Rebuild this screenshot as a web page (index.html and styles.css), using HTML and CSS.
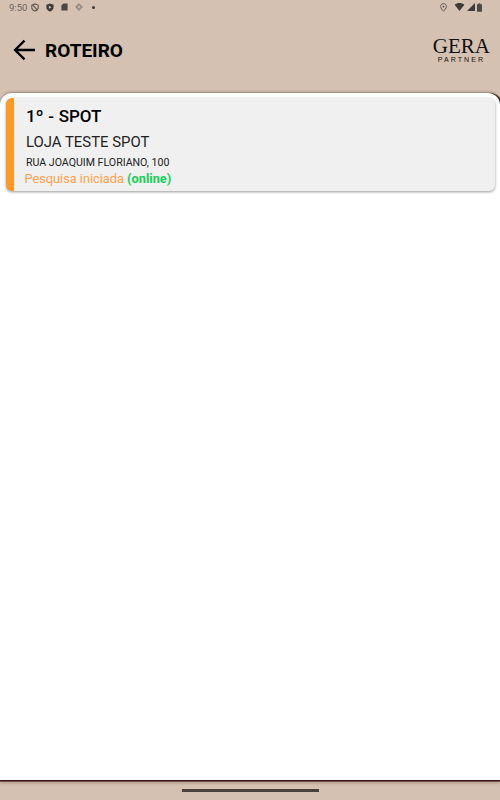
FILE: index.html
```html
<!DOCTYPE html>
<html lang="pt-BR">
<head>
    <meta charset="UTF-8">
    <meta name="viewport" content="width=device-width, initial-scale=1.0">
    <title>Roteiro</title>
    <link rel="stylesheet" href="styles.css">
</head>
<body>
    <header class="topo">
        <div class="status">
            <span class="hora">9:50</span>
            <div class="status-icones">
                <svg width="8" height="9" viewBox="0 0 10 11"><path d="M5 1 L9 2.4 V5.5 C9 8 7 9.4 5 10 C3 9.4 1 8 1 5.5 V2.4 Z M2.5 2.5 L7.5 8.5" fill="none" stroke="#5a534d" stroke-width="1.3"/></svg>
                <svg width="8" height="9" viewBox="0 0 10 11"><path d="M5 .5 L9.5 2 V5.5 C9.5 8 7.2 9.8 5 10.5 C2.8 9.8 .5 8 .5 5.5 V2 Z" fill="#3f3b38"/><path d="M3.6 3.4 L7 5.3 L3.6 7.2 Z" fill="#d5c1b2"/></svg>
                <svg width="7" height="8" viewBox="0 0 9 10"><path d="M3 .5 H8.5 V9.5 H.5 V3 Z" fill="#4d4843"/></svg>
                <svg width="8" height="8" viewBox="0 0 10 10"><path d="M5 0 L10 5 L5 10 L0 5 Z" fill="#9a8f86"/><circle cx="5" cy="5" r="1.3" fill="#d5c1b2"/></svg>
                <span class="ponto"></span>
            </div>
            <div class="status-direita">
                <svg width="7" height="9" viewBox="0 0 8 10"><path d="M4 .7 C6 .7 7.3 2.1 7.3 3.8 C7.3 5.7 5.4 7.8 4 9.3 C2.6 7.8 .7 5.7 .7 3.8 C.7 2.1 2 .7 4 .7 Z" fill="none" stroke="#5a534d" stroke-width="1.1"/><circle cx="4" cy="3.9" r="1" fill="#5a534d"/></svg>
                <svg width="11" height="8" viewBox="0 0 11 9"><path d="M0 2 C3 -.6 8 -.6 11 2 L5.5 9 Z" fill="#3f3b38"/></svg>
                <svg width="8" height="8" viewBox="0 0 9 9"><path d="M9 0 V9 H0 Z" fill="#3f3b38"/></svg>
                <svg width="5" height="9" viewBox="0 0 6 10"><path d="M2 0 H4 V1 H6 V10 H0 V1 H2 Z" fill="#4d4843"/></svg>
            </div>
        </div>
        <div class="barra">
            <svg class="voltar" width="24" height="24" viewBox="0 0 24 24"><path d="M23 12 H4 M12.5 2.6 L3.1 12 L12.5 21.4" fill="none" stroke="#000" stroke-width="2.3"/></svg>
            <h1>ROTEIRO</h1>
            <div class="logo">
                <span class="logo-nome">GERA</span>
                <span class="logo-sub">PARTNER</span>
            </div>
        </div>
    </header>

    <main class="conteudo">
        <div class="card">
            <h2>1º - SPOT</h2>
            <p class="loja">LOJA TESTE SPOT</p>
            <p class="endereco">RUA JOAQUIM FLORIANO, 100</p>
            <p class="situacao">Pesquisa iniciada <b>(online)</b></p>
        </div>
    </main>

    <footer class="rodape">
        <span class="gesto"></span>
    </footer>
</body>
</html>
```

FILE: styles.css
```css
/* Estilos gerais */
body {
    font-family: Roboto, sans-serif;
    background-color: #d5c1b2;
    margin: 0;
    height: 800px;
    overflow: hidden;
    display: flex;
    flex-direction: column;
}

/* Topo */
.topo {
    height: 93px;
    flex-shrink: 0;
}

.status {
    height: 14px;
    padding: 0 18px 0 9px;
    display: flex;
    align-items: center;
    color: #6a625b;
    font-size: 9.5px;
}

.hora {
    margin-right: 4px;
}

.status-icones {
    display: flex;
    align-items: center;
    gap: 7px;
}

.ponto {
    width: 3px;
    height: 3px;
    margin-left: 2px;
    border-radius: 50%;
    background-color: #3f3b38;
}

.status-direita {
    margin-left: auto;
    display: flex;
    align-items: center;
    gap: 2px;
}

.status-direita svg:first-child {
    margin-right: 5px;
}

.barra {
    display: flex;
    align-items: center;
    height: 72px;
    padding: 0 10px 0 12px;
}

.voltar {
    margin-right: 9px;
}

.barra h1 {
    margin: 0;
    font-size: 19px;
    font-weight: 700;
    color: #000;
}

.logo {
    margin-left: auto;
    display: flex;
    flex-direction: column;
    align-items: center;
    color: #111;
}

.logo-nome {
    font-family: "Liberation Serif", serif;
    font-size: 21px;
    line-height: 18px;
}

.logo-sub {
    font-family: "Liberation Sans", sans-serif;
    font-size: 7px;
    line-height: 8px;
    margin-top: 1px;
    letter-spacing: 2.1px;
}

/* Conteudo */
.conteudo {
    flex: 1;
    background-color: #fff;
    border-radius: 12px 12px 0 0;
    padding: 5px 5px 0 6px;
    box-shadow: 2px 0 1px #2b1a14, 0 -1px 3px rgba(70, 50, 40, 0.35), 0 1.5px 0 #3a1014, 0 3px 3px rgba(70, 50, 40, 0.3);
}

.card {
    height: 93px;
    box-sizing: border-box;
    padding: 7px 12px 0 12px;
    background-color: #f0f0f0;
    border-left: 8px solid #ff9a26;
    border-radius: 6px;
    box-shadow: 0 1px 3px rgba(0, 0, 0, 0.4);
}

.card h2 {
    margin: 0;
    font-size: 17px;
    line-height: 22px;
    font-weight: 500;
    word-spacing: 0.5px;
    color: #000;
}

.loja {
    margin: 5px 0 0;
    font-size: 14.9px;
    line-height: 20px;
    color: #222;
}

.endereco {
    margin: 4px 0 0;
    font-size: 10.6px;
    line-height: 13px;
    color: #222;
}

.situacao {
    margin: 2px 0 0 -1.5px;
    font-size: 12.75px;
    line-height: 15px;
    color: #ffa14a;
}

.situacao b {
    color: #14cf57;
}

/* Rodape */
.rodape {
    height: 20px;
    flex-shrink: 0;
    display: flex;
    justify-content: center;
    align-items: center;
}

.gesto {
    width: 137px;
    height: 3px;
    background-color: #47403b;
}
```
